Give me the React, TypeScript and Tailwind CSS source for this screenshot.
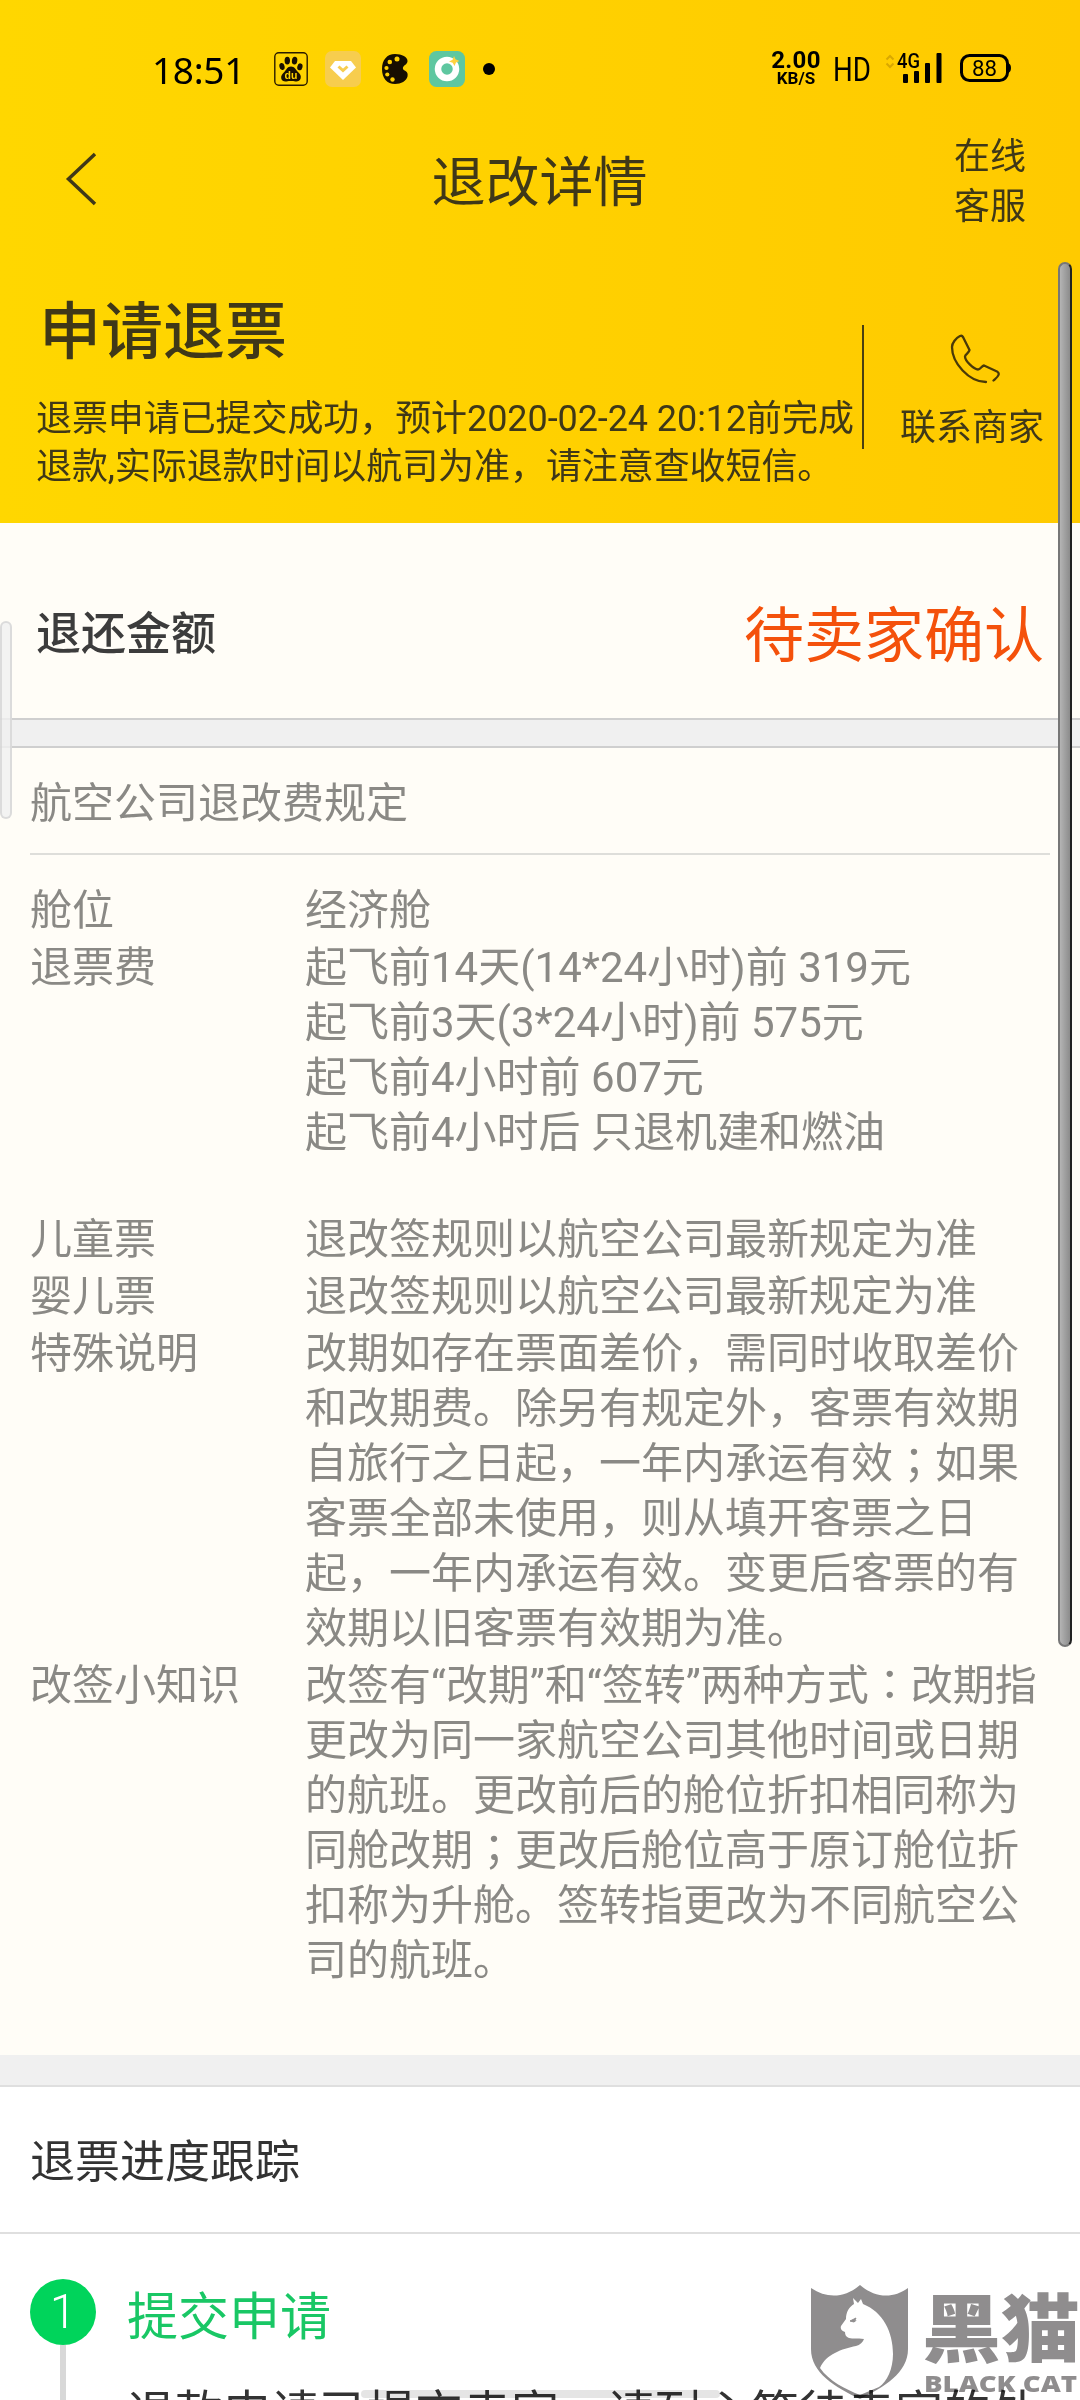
import { Fragment } from 'react';

const rules = [
  { label: '舱位', lines: ['经济舱'] },
  {
    label: '退票费',
    lines: [
      '起飞前14天(14*24小时)前 319元',
      '起飞前3天(3*24小时)前 575元',
      '起飞前4小时前 607元',
      '起飞前4小时后 只退机建和燃油',
    ],
    spaced: true,
  },
  { label: '儿童票', lines: ['退改签规则以航空公司最新规定为准'] },
  { label: '婴儿票', lines: ['退改签规则以航空公司最新规定为准'] },
  {
    label: '特殊说明',
    lines: [
      '改期如存在票面差价，需同时收取差价',
      '和改期费。除另有规定外，客票有效期',
      '自旅行之日起，一年内承运有效；如果',
      '客票全部未使用，则从填开客票之日',
      '起，一年内承运有效。变更后客票的有',
      '效期以旧客票有效期为准。',
    ],
  },
  {
    label: '改签小知识',
    lines: [
      '改签有“改期”和“签转”两种方式：改期指',
      '更改为同一家航空公司其他时间或日期',
      '的航班。更改前后的舱位折扣相同称为',
      '同舱改期；更改后舱位高于原订舱位折',
      '扣称为升舱。签转指更改为不同航空公',
      '司的航班。',
    ],
  },
];

// full-width colons and semicolons sit in the middle of their cell
const Line = ({ text }: { text: string }) => (
  <p className="h-[55px] whitespace-nowrap">
    {text.split(/([：；])/).map((part, i) =>
      part === '：' || part === '；' ? (
        <span key={i} lang="ja" className="font-['Noto_Sans_CJK_JP',sans-serif] leading-none">{part}</span>
      ) : (
        <Fragment key={i}>{part}</Fragment>
      )
    )}
  </p>
);

const StatusBar = () => (
  <div className="flex h-[120px] items-start justify-between pl-[152px] pr-[69px] pt-[50px] text-black">
    <div className="flex h-[37px] items-center">
      <span className="w-[122px] pt-[2px] font-['Noto_Sans',sans-serif] text-[37px] leading-[37px] tracking-[-0.3px]">18:51</span>
      {/* Baidu */}
      <svg className="h-[34px] w-[34px]" viewBox="0 0 34 34">
        <rect x="0.8" y="0.8" width="32.4" height="32.4" rx="4" fill="none" stroke="#2a1c00" strokeWidth="1.4" />
        <g fill="#1a1000">
          <ellipse cx="8" cy="14.5" rx="2.6" ry="3.6" transform="rotate(-12 8 14.5)" />
          <ellipse cx="13.3" cy="8.6" rx="2.7" ry="3.9" />
          <ellipse cx="20.6" cy="8.6" rx="2.7" ry="3.9" transform="rotate(8 20.6 8.6)" />
          <ellipse cx="25.9" cy="14.8" rx="2.6" ry="3.5" transform="rotate(14 25.9 14.8)" />
          <path d="M17 14.5c3.600 0 4.500 3 6.700 5.200 2.300 2.300 3.600 3.600 3 6.500-.6 3-3.300 3.400-5.200 3.200-3-.4-6-.4-9 0-2.500.3-4.900-.6-5.300-3.200-.4-2.800 1-4.200 3.100-6.300 2.300-2.300 3.100-5.400 6.700-5.400z" />
        </g>
        <text x="17" y="27" textAnchor="middle" fontFamily="Liberation Sans, sans-serif" fontWeight="700" fontSize="10.5" fill="#ffd200">du</text>
      </svg>
      {/* gem */}
      <svg className="ml-[17px] h-9 w-9" viewBox="0 0 36 36">
        <rect width="36" height="36" rx="7" fill="#f7cd4e" />
        <path d="M10 10h16l5 6.500L18 29 5 16.500z" fill="#fff" />
        <path d="M13.500 15.500l4.500 4 4.500-4" fill="none" stroke="#f7cd4e" strokeWidth="3" />
      </svg>
      {/* palette */}
      <svg className="ml-[21px] h-[30px] w-[26px]" viewBox="0 0 26 30">
        <path d="M13 0C20 0 25.500 3 25.500 7c0 3-2.500 3.500-4 5.500s0 3.500 2 4.500 2.500 3 2 5.500C24.500 27 19 30 13 30 5 30 0 24 0 15S5 0 13 0z" fill="#170e00" />
        <g fill="#ffd000">
          <circle cx="15" cy="5" r="2.500" />
          <circle cx="7.800" cy="8" r="2.300" />
          <circle cx="4.500" cy="14" r="2.100" />
          <circle cx="5.300" cy="20.500" r="2.100" />
          <circle cx="10.500" cy="25.500" r="2.200" />
        </g>
      </svg>
      {/* ring camera */}
      <svg className="ml-[21px] h-9 w-9" viewBox="0 0 36 36">
        <rect width="36" height="36" rx="7.500" fill="#5ec7a0" />
        <circle cx="18" cy="18" r="9" fill="none" stroke="#fff" strokeWidth="6.500" />
        <path d="M25 5l1.500 3.300L30.500 10l-3.500 1.500L25.500 15l-1.800-3.300L20 10.500l3.600-1.800z" fill="#ffd23e" />
      </svg>
      <span className="ml-[18px] h-3 w-3 rounded-full bg-black" />
    </div>
    <div className="flex h-[37px] items-center">
      <div className="flex w-[48px] flex-col items-center font-[Roboto,sans-serif] font-bold">
        <span className="text-[24px] leading-[20px] tracking-[0.3px]">2.00</span>
        <span className="text-[17px] leading-[17px]">KB/S</span>
      </div>
      <svg className="ml-[13px] h-[37px] w-[178px]" viewBox="0 0 178 37">
        <text x="0" y="30.500" textLength="38" lengthAdjust="spacingAndGlyphs" fontFamily="Roboto, sans-serif" fontSize="34">HD</text>
        <path d="M53.500 9.500L57 6l3.500 3.500M53.500 13.500L57 17l3.500-3.500" fill="none" stroke="#d9a800" strokeWidth="2" />
        <text x="64" y="17.500" textLength="23" lengthAdjust="spacingAndGlyphs" fontFamily="Roboto, sans-serif" fontWeight="500" fontSize="20">4G</text>
        <rect x="70" y="24" width="5" height="9" rx="1" />
        <rect x="81" y="21" width="5" height="12" rx="1" />
        <rect x="92" y="13" width="5" height="20" rx="1" />
        <rect x="103.500" y="3" width="5" height="30" rx="1" />
        <rect x="128.500" y="5.500" width="46" height="25" rx="8" fill="none" stroke="#000" strokeWidth="3" />
        <path d="M175 13c4 1 4 9 0 10z" />
        <text x="151.500" y="26" textAnchor="middle" textLength="25" lengthAdjust="spacingAndGlyphs" fontFamily="Roboto, sans-serif" fontSize="22">88</text>
      </svg>
    </div>
  </div>
);

const Header = () => (
  <header className="h-[523px] bg-linear-to-r from-[#ffd700] to-[#ffca00] text-[#3f3818]">
    <StatusBar />
    <nav className="flex h-[124px] items-center justify-between pl-[64px] pr-[54px]">
      <svg className="mb-[6px] h-[54px] w-[72px]" viewBox="0 0 72 54" fill="none" stroke="#3f3818" strokeWidth="3.500">
        <path d="M31 2L4.500 27 31 52" />
      </svg>
      <h1 className="mr-[11px] pt-[4px] text-[54px] leading-[62px]">退改详情</h1>
      <div className="w-[72px] text-[36px] leading-[50px]">
        <p>在线</p>
        <p>客服</p>
      </div>
    </nav>
    <div className="flex pt-[54px]">
      <div className="w-[862px] pl-9">
        <h2 className="pl-[3px] text-[62px] font-medium leading-[70px]">申请退票</h2>
        <div className="mt-[27px] whitespace-nowrap text-[36px] leading-[48px] tracking-[-0.08px]">
          <p>退票申请已提交成功，预计2020-02-24 20:12前完成</p>
          <p>退款,实际退款时间以航司为准，请注意查收短信。</p>
        </div>
      </div>
      <div className="mt-[27px] h-[124px] w-[2px] bg-[#4a3f10]" />
      <div className="flex flex-col items-center pl-9 pt-9">
        <svg className="mr-[-6px] h-[50px] w-[50px]" viewBox="0 0 50 50" fill="none" stroke="#4a3a08" strokeWidth="2.3" strokeLinecap="round" strokeLinejoin="round">
          <path d="M36 48C19 48 2 29 2 13 2 9 6 4 10 2c1.500-.7 2.500 0 3 1l6.500 13c-.5 3-4 4-4.500 6.500C15 27 24 35.500 28 35.500c2.500 0 3.500-3.500 6-4L47 37.500c2 1 2 2 1.500 3.500-.7 2-3 3.700-5 5.500" />
        </svg>
        <span className="mt-[23px] text-[36px] leading-[42px]">联系商家</span>
      </div>
    </div>
  </header>
);

const Watermark = () => (
  <div className="absolute left-[811px] top-[2285px] flex text-[#8f8d8e] mix-blend-multiply">
    <svg className="h-[115px] w-[98px]" viewBox="0 0 98 115">
      <path d="M0 3c16 11 34 10 49-3 15 13 33 14 48 3v61c0 24-24 38-48 50C24 102 0 88 0 64z" fill="#8f8d8e" />
      <path d="M42 13l5 5 3-4 2 5c20 8 30 28 30 50 0 15-6 28-14 33l-19 8C34 104 18 96 9 83c6-14 22-19 36-22 4-1 7-4 8-7-7-1-11 0-15-1-3-1-4-3-4-6-3-1-5-3-4-6l5-7c0-7 3-12 8-15z" fill="#fff" />
      <path d="M39 36l6-3-2 4zM43 37c1-1 2-1 2-2" stroke="#8f8d8e" fill="#8f8d8e" />
    </svg>
    <div className="ml-4 mt-[6px] w-[154px]">
      <svg className="h-[78px] w-[154px] overflow-visible" viewBox="0 0 154 78">
        <text x="-3" y="65" textLength="158" lengthAdjust="spacingAndGlyphs" fontFamily="Noto Sans CJK SC, sans-serif" fontWeight="900" fontSize="74" fill="#8f8d8e">黑猫</text>
      </svg>
      <svg className="mt-[4px] block h-[24px] w-[153px]" viewBox="0 0 153 24">
        <text x="-1" y="19" textLength="153" lengthAdjust="spacingAndGlyphs" fontFamily="Open Sans, sans-serif" fontWeight="800" fontSize="23" fill="#8f8d8e">BLACK CAT</text>
      </svg>
    </div>
  </div>
);

const App = () => {
  return (
    <div lang="zh-CN" className="relative h-[2400px] w-[1080px] overflow-hidden bg-white font-[Roboto,'Noto_Sans_CJK_SC',sans-serif]">
      <Header />

      <main>
        <section className="flex h-[195px] items-center justify-between bg-[#fffdf7] pl-[36px] pr-[36px] pt-7">
          <span className="text-[45px] leading-[54px] font-medium text-[#3c3c3c]">退还金额</span>
          <span className="pt-[4px] text-[60px] leading-[68px] text-[#f4510b]">待卖家确认</span>
        </section>
        <div className="h-[30px] border-y-2 border-[#cfcfcf] bg-[#f0f0f0]" />

        <section className="h-[1307px] bg-[#fffdf7] px-[30px] text-[42px] leading-[55px] text-[#8a8985]">
          <h3 className="h-[107px] border-b-2 border-[#dededa] pt-7">航空公司退改费规定</h3>
          <dl className="pt-[27px]">
            {rules.map((rule) => (
              <div key={rule.label} className={`flex py-px ${rule.spaced ? 'mb-[50px]' : ''}`}>
                <dt className="w-[275px] shrink-0">{rule.label}</dt>
                <dd>
                  {rule.lines.map((line) => (
                    <Line key={line} text={line} />
                  ))}
                </dd>
              </div>
            ))}
          </dl>
        </section>
        <div className="h-8 border-b-2 border-[#dfdfdf] bg-[#f0f0f0]" />

        <section className="text-[#333]">
          <h3 className="flex h-[147px] items-center border-b-2 border-[#dfdfdf] pl-[30px] pt-[7px] text-[45px]">退票进度跟踪</h3>
          <div className="flex pl-[30px] pt-[45px]">
            <div className="flex w-[66px] flex-col items-center">
              <span className="flex h-[66px] w-[66px] items-center justify-center rounded-full bg-[#00d45b] text-[48px] font-light leading-none text-white">1</span>
              <span className="h-[60px] w-[6px] bg-[#d8d8d8]" />
            </div>
            <div className="w-[954px] pl-[31px]">
              <p className="pt-[9px] text-[51px] leading-[60px] text-[#19c765]">提交申请</p>
              <p className="mt-[36px] text-[48px] leading-[60px]">退款申请已提交卖家，请耐心等待卖家的处理</p>
            </div>
          </div>
        </section>
      </main>

      {/* edge handle, scrollbar and gesture bar float over the page */}
      <div className="absolute left-0 top-[621px] h-[198px] w-3 rounded-full border-2 border-[#d4d4d4]/80 bg-[#f0f0f0]/80" />
      <div className="absolute left-[1058px] top-[262px] h-[1385px] w-[14px] rounded-full border-2 border-r-[#222] border-l-[#777] border-y-[#777] bg-linear-to-r from-[#b4b4b4] to-[#8c8c8c]" />
      <div className="absolute left-[361px] top-[2390px] h-2 w-[359px] rounded-full bg-black/10" />
      <Watermark />
    </div>
  );
};

export default App;
